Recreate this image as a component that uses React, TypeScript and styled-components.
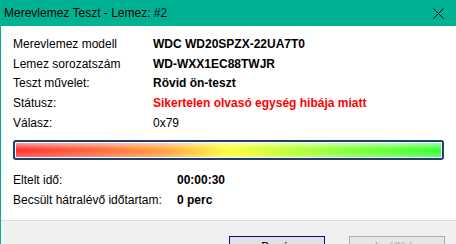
import React from 'react';
import styled, { createGlobalStyle } from 'styled-components';

const GlobalStyle = createGlobalStyle`
    html, body {
        margin: 0;
        padding: 0;
        background: #ffffff;
    }
    body {
        font-family: 'Liberation Sans', Arial, sans-serif;
        font-size: 12px;
        color: #000000;
    }
`;

// Adatsorok a lemez tesztjéhez
const infoRows = [
    { label: 'Merevlemez modell', value: 'WDC WD20SPZX-22UA7T0', bold: true },
    { label: 'Lemez sorozatszám', value: 'WD-WXX1EC88TWJR', bold: true },
    { label: 'Teszt művelet:', value: 'Rövid ön-teszt', bold: true },
    { label: 'Státusz:', value: 'Sikertelen olvasó egység hibája miatt', bold: true, error: true },
    { label: 'Válasz:', value: '0x79', bold: false },
];

const timeRows = [
    { label: 'Eltelt idő:', value: '00:00:30' },
    { label: 'Becsült hátralévő időtartam:', value: '0 perc' },
];

const App = () => {
    return (
        <Window>
            <GlobalStyle />
            <TitleBar>
                <Title>Merevlemez Teszt - Lemez: #2</Title>
                <CloseButton>
                    <svg width='11' height='11' viewBox='0 0 11 11'>
                        <path d='M0.5 0.5 L10.5 10.5 M10.5 0.5 L0.5 10.5' stroke='#000' strokeWidth='1' />
                    </svg>
                </CloseButton>
            </TitleBar>
            <Body>
                <InfoGrid labelWidth={140}>
                    {infoRows.map((row) => (
                        <React.Fragment key={row.label}>
                            <Label>{row.label}</Label>
                            <Value bold={row.bold} error={row.error}>{row.value}</Value>
                        </React.Fragment>
                    ))}
                </InfoGrid>
                <ProgressFrame>
                    <ProgressFill />
                </ProgressFrame>
                <InfoGrid labelWidth={164}>
                    {timeRows.map((row) => (
                        <React.Fragment key={row.label}>
                            <Label>{row.label}</Label>
                            <Value bold>{row.value}</Value>
                        </React.Fragment>
                    ))}
                </InfoGrid>
            </Body>
            <Footer>
                <Button primary>Bezár</Button>
                <Button disabled>Leállítás</Button>
            </Footer>
        </Window>
    );
};

const Window = styled.div`
    display: flex;
    flex-direction: column;
    width: 456px;
    height: 244px;
    overflow: hidden;
    border-left: 1px solid #00b294;
    box-sizing: border-box;
`;

const TitleBar = styled.div`
    display: flex;
    align-items: center;
    justify-content: space-between;
    height: 26px;
    margin-left: -1px;
    padding: 0 8px 0 4px;
    background: #00b294;
    flex-shrink: 0;
`;

const Title = styled.span`
    font-size: 12px;
    color: #000000;
    padding-bottom: 1px;
`;

const CloseButton = styled.div`
    display: flex;
    align-items: center;
    justify-content: center;
    width: 20px;
    height: 20px;
`;

const Body = styled.div`
    display: flex;
    flex-direction: column;
    padding: 8px 12px 10px 12px;
    background: #ffffff;
    border-bottom: 1px solid #dcdcdc;
`;

const InfoGrid = styled.div<{ labelWidth: number }>`
    display: grid;
    grid-template-columns: ${(p) => p.labelWidth}px 1fr;
    grid-auto-rows: 19.7px;
    align-items: center;
`;

const Label = styled.span`
    white-space: nowrap;
`;

const Value = styled.span<{ bold?: boolean; error?: boolean }>`
    white-space: nowrap;
    font-weight: ${(p) => (p.bold ? 700 : 400)};
    color: ${(p) => (p.error ? '#ff0000' : '#000000')};
`;

const ProgressFrame = styled.div`
    margin: 8px 0 10px 0;
    height: 20px;
    width: 431px;
    box-sizing: border-box;
    border: 2px solid #1c3f6e;
    border-radius: 3px;
    padding: 1px;
    background: #ffffff;
`;

const ProgressFill = styled.div`
    height: 100%;
    background:
        linear-gradient(180deg,
            rgba(255, 255, 255, 0.55) 0%,
            rgba(255, 255, 255, 0.15) 35%,
            rgba(255, 255, 255, 0) 55%,
            rgba(255, 255, 255, 0.25) 100%),
        linear-gradient(90deg,
            #ff2f2f 0%,
            #ff6a3a 20%,
            #ffa040 35%,
            #ffff33 50%,
            #c8ff33 62%,
            #8cff3a 75%,
            #33ff33 100%);
`;

const Footer = styled.div`
    display: flex;
    justify-content: flex-end;
    gap: 24px;
    flex: 1;
    padding: 15px 11px 0 0;
    background: #f0f0f0;
`;

const Button = styled.div<{ primary?: boolean; disabled?: boolean }>`
    display: flex;
    justify-content: center;
    align-items: center;
    width: 96px;
    height: 23px;
    box-sizing: border-box;
    font-size: 12px;
    border: 1px solid ${(p) => (p.primary ? '#0a0a8c' : '#adadad')};
    background: ${(p) => (p.disabled ? '#e6e6e6' : '#e1e1e1')};
    color: ${(p) => (p.disabled ? '#a0a0a0' : '#000000')};
`;

export default App;
